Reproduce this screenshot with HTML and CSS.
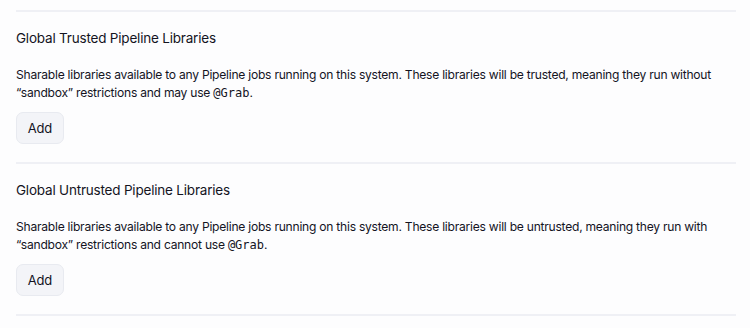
FILE: index.html
```html
<html>
    <head>
        <title>Global Pipeline Libraries</title>
        <link rel="stylesheet" href="styles.css">
    </head>

    <body>
        <div class="config">
            <!-- Trusted libraries -->
            <div class="section">
                <div class="section-title">Global Trusted Pipeline Libraries</div>
                <div class="section-desc">
                    Sharable libraries available to any Pipeline jobs running on this system. These libraries will be trusted, meaning they run without<br>
                    “sandbox” restrictions and may use <code>@Grab</code>.
                </div>
                <button class="add-btn">Add</button>
            </div>

            <!-- Untrusted libraries -->
            <div class="section">
                <div class="section-title">Global Untrusted Pipeline Libraries</div>
                <div class="section-desc">
                    Sharable libraries available to any Pipeline jobs running on this system. These libraries will be untrusted, meaning they run with<br>
                    “sandbox” restrictions and cannot use <code>@Grab</code>.
                </div>
                <button class="add-btn">Add</button>
            </div>
        </div>
    </body>
</html>
```

FILE: styles.css
```css
/* Page */
body {
    margin: 0;
    background-color: #fdfdfe;
    color: #14141f;
    font-family: Inter, "Noto Sans", sans-serif;
}
.config {
    padding: 10px 14px 0 16px;
}

/* Sections */
.section {
    border-top: 2px solid #eff0f5;
    padding: 16px 0 18px 0;
}
.section:last-child {
    border-bottom: 2px solid #eff0f5;
}
.section-title {
    font-size: 13.5px;
    letter-spacing: -0.2px;
    line-height: 20px;
    margin-bottom: 18px;
}
.section-desc {
    font-size: 12.1px;
    letter-spacing: -0.25px;
    line-height: 18px;
    margin-bottom: 10px;
}
.section-desc code {
    font-family: "DejaVu Sans Mono", monospace;
    font-size: 12px;
    letter-spacing: 0;
}

/* Button */
.add-btn {
    display: block;
    width: 48px;
    height: 32px;
    padding: 0;
    border: 1px solid #e8eaf0;
    border-radius: 7px;
    background-color: #f3f4f8;
    color: #14141f;
    font-family: Inter, "Noto Sans", sans-serif;
    font-size: 13px;
    letter-spacing: -0.2px;
}
```
